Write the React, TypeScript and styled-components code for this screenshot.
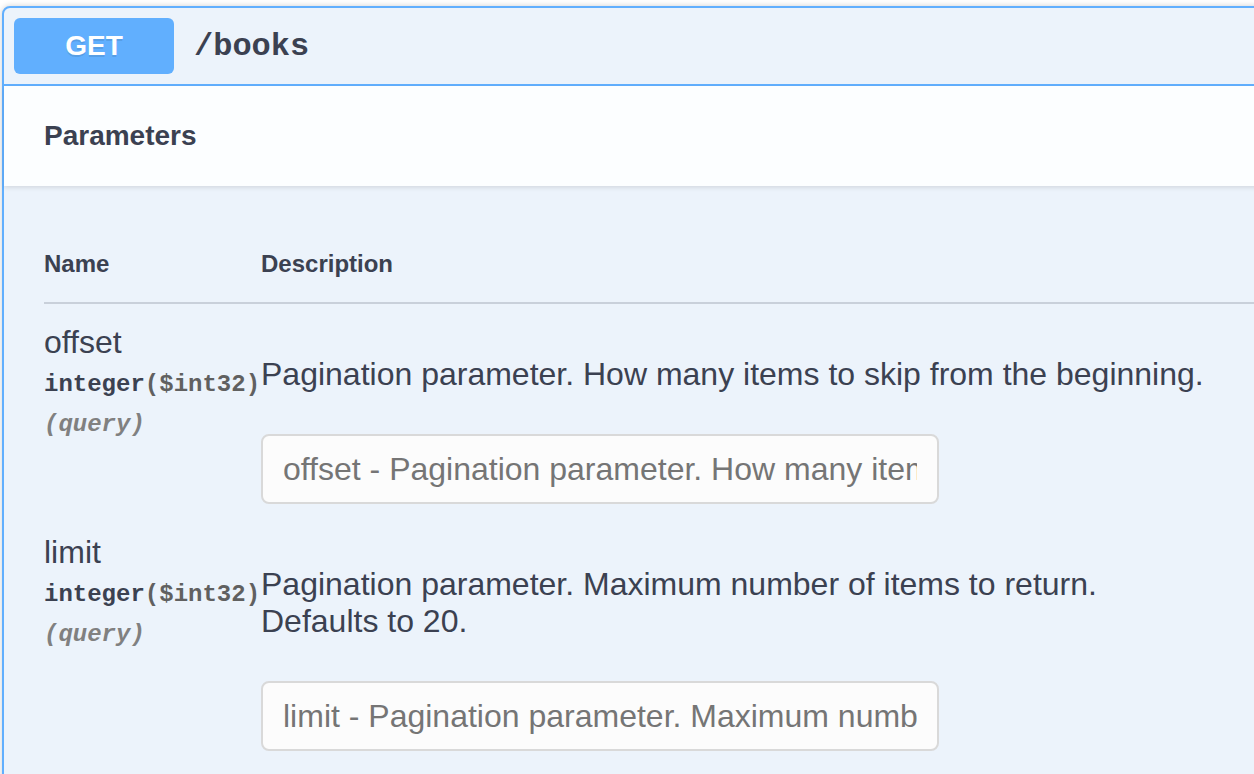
import React from 'react';
import styled, { createGlobalStyle } from 'styled-components';

// Swagger-style operation block, rendered at 2x scale.

const GlobalStyle = createGlobalStyle`
  html, body {
    margin: 0;
    padding: 0;
    background: #ffffff;
    overflow: hidden;
  }
  body {
    font-family: "Liberation Sans", Arial, sans-serif;
    color: #3b4151;
  }
  * {
    box-sizing: border-box;
  }
`;

const Page = styled.div`
  padding: 6px 0 0 2px;
  width: 1254px;
  height: 774px;
  overflow: hidden;
`;

const OpBlock = styled.div`
  width: 1320px;
  border: 2px solid #61affe;
  border-radius: 8px;
  background: #ecf3fb;
  box-shadow: 0 0 6px rgba(0, 0, 0, 0.19);
  min-height: 900px;
`;

const Summary = styled.div`
  display: flex;
  align-items: center;
  padding: 10px;
  border-bottom: 2px solid #61affe;
`;

const MethodBadge = styled.span`
  display: flex;
  align-items: center;
  justify-content: center;
  width: 160px;
  height: 56px;
  border-radius: 6px;
  background: #61affe;
  color: #ffffff;
  font-size: 28px;
  font-weight: 700;
  text-shadow: 0 2px 0 rgba(0, 0, 0, 0.1);
`;

const Path = styled.span`
  padding: 0 20px;
  font-family: "Liberation Mono", "Courier New", monospace;
  font-size: 32px;
  font-weight: 700;
  color: #3b4151;
`;

const SectionHeader = styled.div`
  display: flex;
  align-items: center;
  height: 100px;
  padding: 0 40px;
  background: rgba(255, 255, 255, 0.85);
  box-shadow: 0 2px 4px rgba(0, 0, 0, 0.1);
`;

const SectionTitle = styled.h4`
  margin: 0;
  font-size: 28px;
  font-weight: 700;
`;

const TableContainer = styled.div`
  padding: 40px 40px 0 40px;
`;

const ParamGrid = styled.div`
  display: grid;
  grid-template-columns: 217px 1fr;
`;

const HeadCell = styled.div`
  padding: 24px 0;
  font-size: 24px;
  font-weight: 700;
  border-bottom: 2px solid #c9d0da;
`;

const NameCell = styled.div`
  padding-top: 20px;
  white-space: nowrap;
`;

const ParamName = styled.div`
  font-size: 32px;
  line-height: 37px;
`;

const ParamType = styled.div`
  padding: 10px 0;
  font-family: "Liberation Mono", "Courier New", monospace;
  font-size: 24px;
  line-height: 27px;
  font-weight: 700;
  color: #3b4151;
`;

const TypeFormat = styled.span`
  color: #606060;
`;

const ParamIn = styled.div`
  margin-top: 3px;
  font-family: "Liberation Mono", "Courier New", monospace;
  font-size: 24px;
  line-height: 27px;
  font-weight: 700;
  font-style: italic;
  color: #808080;
`;

const DescCell = styled.div`
  padding: 20px 0 10px 0;
`;

const DescText = styled.p`
  margin: 32px 0 41px 0;
  font-size: 32px;
  line-height: 37px;
`;

const ParamInput = styled.input`
  display: block;
  width: 678px;
  height: 70px;
  margin: 10px 0 0 0;
  padding: 0 20px;
  border: 2px solid #d9d9d9;
  border-radius: 8px;
  background: #fcfcfc;
  font-family: "Liberation Sans", Arial, sans-serif;
  font-size: 32px;
  color: #3b4151;
  outline: none;

  &::placeholder {
    color: #757575;
  }
`;

type Param = {
  name: string;
  type: string;
  format: string;
  location: string;
  description: React.ReactNode;
  placeholder: string;
};

const params: Param[] = [
  {
    name: 'offset',
    type: 'integer',
    format: '$int32',
    location: 'query',
    description: 'Pagination parameter. How many items to skip from the beginning.',
    placeholder: 'offset - Pagination parameter. How many items to skip from the beginning.',
  },
  {
    name: 'limit',
    type: 'integer',
    format: '$int32',
    location: 'query',
    description: (
      <>
        Pagination parameter. Maximum number of items to return.
        <br />
        Defaults to 20.
      </>
    ),
    placeholder: 'limit - Pagination parameter. Maximum number of items to return. Defaults to 20.',
  },
];

export default function App() {
  return (
    <>
      <GlobalStyle />
      <Page>
        <OpBlock>
          <Summary>
            <MethodBadge>GET</MethodBadge>
            <Path>/books</Path>
          </Summary>
          <SectionHeader>
            <SectionTitle>Parameters</SectionTitle>
          </SectionHeader>
          <TableContainer>
            <ParamGrid>
              <HeadCell>Name</HeadCell>
              <HeadCell>Description</HeadCell>
              {params.map((p) => (
                <React.Fragment key={p.name}>
                  <NameCell>
                    <ParamName>{p.name}</ParamName>
                    <ParamType>
                      {p.type}
                      <TypeFormat>({p.format})</TypeFormat>
                    </ParamType>
                    <ParamIn>({p.location})</ParamIn>
                  </NameCell>
                  <DescCell>
                    <DescText>{p.description}</DescText>
                    <ParamInput type="text" placeholder={p.placeholder} />
                  </DescCell>
                </React.Fragment>
              ))}
            </ParamGrid>
          </TableContainer>
        </OpBlock>
      </Page>
    </>
  );
}
